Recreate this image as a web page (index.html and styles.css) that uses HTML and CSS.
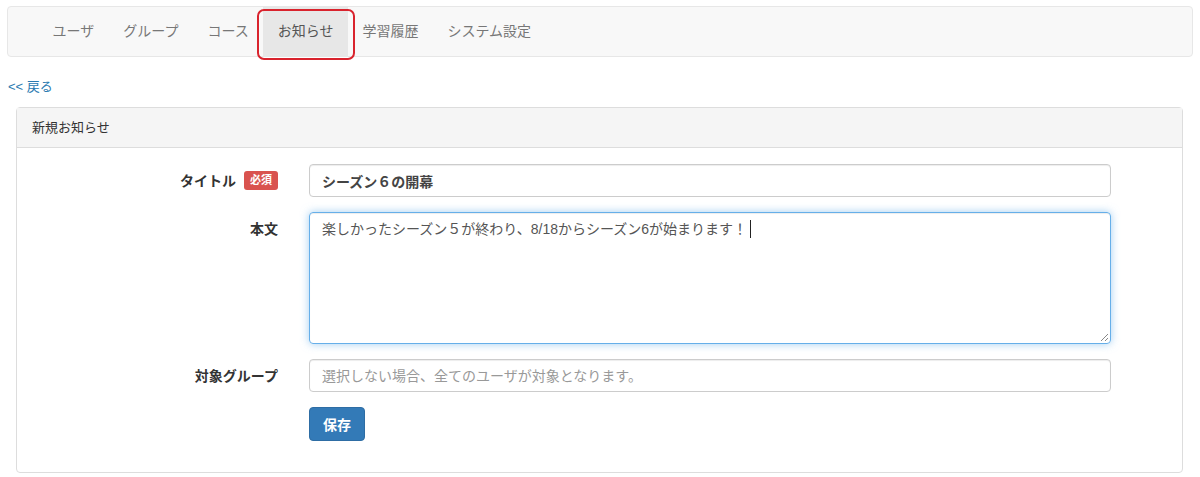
FILE: index.html
```html
<!DOCTYPE html>
<html lang="ja">
  <head>
    <meta charset="UTF-8" />
    <meta name="viewport" content="width=device-width, initial-scale=1.0" />
    <title>新規お知らせ</title>
    <link rel="stylesheet" href="styles.css">
  </head>
  <body>
    <div class="page">
      <nav class="navbar">
        <ul class="nav">
          <li><a href="#">ユーザ</a></li>
          <li><a href="#">グループ</a></li>
          <li><a href="#">コース</a></li>
          <li class="active"><a href="#">お知らせ</a></li>
          <li><a href="#">学習履歴</a></li>
          <li><a href="#">システム設定</a></li>
        </ul>
      </nav>

      <a class="back" href="#">&lt;&lt; 戻る</a>

      <div class="panel">
        <div class="panel-heading">新規お知らせ</div>
        <div class="panel-body">
          <form class="form">
            <label class="label">タイトル <span class="badge">必須</span></label>
            <input class="control bold" type="text" value="シーズン６の開幕">

            <label class="label top">本文</label>
            <div class="control area">楽しかったシーズン５が終わり、8/18からシーズン6が始まります！<span class="caret"></span>
              <!-- resize grip -->
              <svg class="grip" width="9" height="9" viewBox="0 0 9 9">
                <path d="M8 1 L1 8 M8 5 L5 8" stroke="#888" stroke-width="1" fill="none" />
              </svg>
            </div>

            <label class="label">対象グループ</label>
            <input class="control" type="text" placeholder="選択しない場合、全てのユーザが対象となります。">

            <span></span>
            <div><button class="btn" type="button">保存</button></div>
          </form>
        </div>
      </div>
    </div>
  </body>
</html>
```

FILE: styles.css
```css
* {
  box-sizing: border-box;
}
body {
  margin: 0;
  font-family: "Liberation Sans", "Noto Sans CJK JP", sans-serif;
  font-size: 14px;
  line-height: 20px;
  color: #333;
  background: #fff;
}
.page {
  padding: 6px 7px 0 7px;
}

/* top nav */
.navbar {
  height: 51px;
  background-color: #f8f8f8;
  border: 1px solid #e7e7e7;
  border-radius: 4px;
  margin-bottom: 20px;
}
.nav {
  list-style: none;
  margin: 0;
  padding: 0 0 0 30px;
  display: flex;
  height: 49px;
}
.nav li {
  position: relative;
}
.nav a {
  display: block;
  height: 49px;
  line-height: 49px;
  padding: 0 14.5px;
  color: #777;
  text-decoration: none;
}
.nav .active a {
  background-color: #e7e7e7;
  color: #555;
}
/* red highlight drawn around the active tab */
.nav .active::after {
  content: "";
  position: absolute;
  top: 2px;
  left: -6px;
  right: -7px;
  bottom: -4px;
  border: 2px solid #d9232d;
  border-radius: 7px;
}

.back {
  display: block;
  margin-left: 1px;
  color: #2a7ab0;
  text-decoration: none;
  font-size: 13px;
}

/* panel */
.panel {
  margin: 10px 10px 0 9px;
  border: 1px solid #ddd;
  border-radius: 4px;
}
.panel-heading {
  height: 40px;
  line-height: 39px;
  padding: 0 15px;
  background-color: #f5f5f5;
  border-bottom: 1px solid #ddd;
  font-size: 13px;
}
.panel-body {
  padding: 16px 0 31px 0;
}
.form {
  display: grid;
  grid-template-columns: 261px 802px;
  column-gap: 31px;
  row-gap: 15px;
}
.label {
  display: flex;
  justify-content: flex-end;
  align-items: center;
  gap: 8px;
  font-weight: bold;
}
.label.top {
  align-items: flex-start;
  padding-top: 7px;
}
.badge {
  display: inline-block;
  width: 34px;
  height: 19px;
  line-height: 19px;
  text-align: center;
  background-color: #d9534f;
  color: #fff;
  font-size: 11px;
  border-radius: 3px;
}
.control {
  height: 33px;
  padding: 6px 12px;
  border: 1px solid #ccc;
  border-radius: 4px;
  font-family: inherit;
  font-size: 14px;
  color: #555;
  box-shadow: inset 0 1px 1px rgba(0, 0, 0, 0.075);
}
.control::placeholder {
  color: #999;
}
.control.bold {
  font-weight: bold;
  color: #444;
}
.area {
  position: relative;
  height: 132px;
  line-height: 20px;
  border-color: #66afe9;
  box-shadow: inset 0 1px 1px rgba(0, 0, 0, 0.075), 0 0 8px rgba(102, 175, 233, 0.6);
}
.caret {
  display: inline-block;
  width: 1px;
  height: 18px;
  margin-left: 3px;
  vertical-align: -4px;
  background: #222;
}
.grip {
  position: absolute;
  right: 1px;
  bottom: 1px;
}
.btn {
  height: 34px;
  width: 56px;
  border: 1px solid #2e6da4;
  border-radius: 4px;
  background-color: #337ab7;
  color: #fff;
  font-family: inherit;
  font-size: 14px;
  font-weight: bold;
}
```
